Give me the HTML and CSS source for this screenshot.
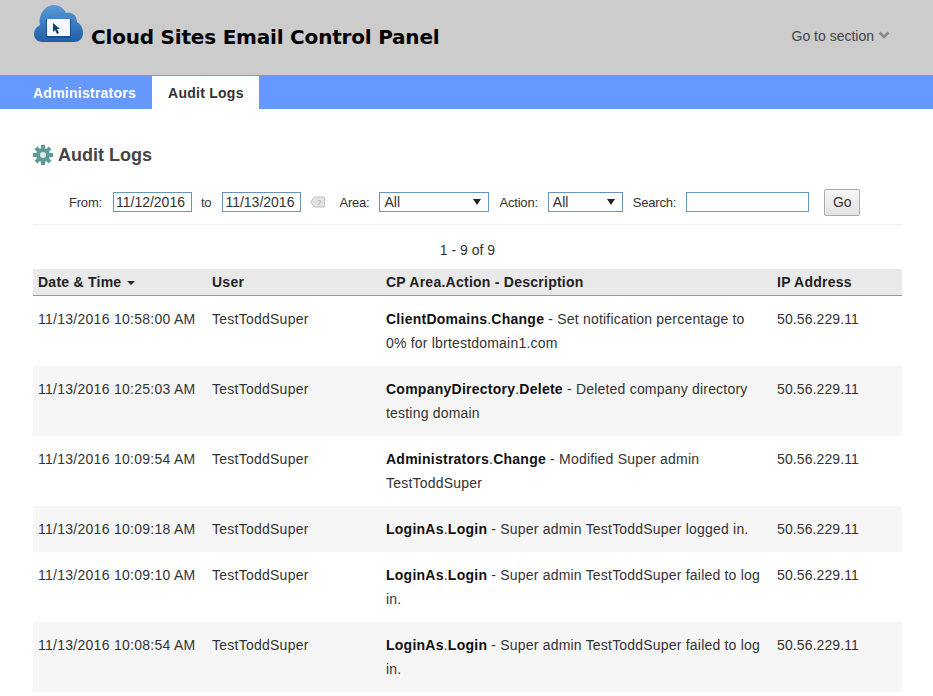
FILE: index.html
```html
<!DOCTYPE html>
<html lang="en">
<head>
  <meta charset="UTF-8">
  <meta name="viewport" content="width=device-width, initial-scale=1.0">
  <title>Audit Logs</title>
  <link rel="stylesheet" href="styles.css">
</head>
<body>
  <header class="top-bar">
    <div class="brand">
      <svg class="brand-logo" width="50" height="40" viewBox="0 0 50 40" aria-hidden="true">
        <defs>
          <linearGradient id="cloudFill" x1="0" y1="0" x2="0" y2="1">
            <stop offset="0" stop-color="#5b9ad6"/>
            <stop offset="1" stop-color="#1f5fa8"/>
          </linearGradient>
        </defs>
        <path d="M8 38 C3 38 0 34 0 30 C0 26 2 23 6 21 C4 11 11 1 20 1 C26 1 30 5 32 9 C37 7 43 11 43 18 C47 20 49 25 49 29 C49 35 45 38 40 38 Z" fill="url(#cloudFill)"/>
        <rect x="12" y="15" width="25" height="19" fill="#174f96"/>
        <rect x="13" y="15" width="23" height="17" fill="#f3f6fa"/>
        <path d="M19 19 L19 28 L21 26 L23 30 L25 29 L23 25 L26 25 Z" fill="#123f7a"/>
      </svg>
      <h1 class="brand-title">Cloud Sites Email Control Panel</h1>
    </div>
    <div class="section-menu">
      <span>Go to section</span>
      <svg width="12" height="8" viewBox="0 0 12 8" aria-hidden="true">
        <path d="M1.5 1.5 L6 6 L10.5 1.5" fill="none" stroke="#888" stroke-width="2.6"/>
      </svg>
    </div>
  </header>

  <nav class="tabs">
    <a class="tab" href="#">Administrators</a>
    <a class="tab active" href="#">Audit Logs</a>
  </nav>

  <main class="content">
    <h2 class="page-title">
      <svg width="20" height="20" viewBox="0 0 20 20" aria-hidden="true">
        <g fill="#5f9a98">
          <rect x="8" y="0" width="4" height="20"/>
          <rect x="8" y="0" width="4" height="20" transform="rotate(45 10 10)"/>
          <rect x="8" y="0" width="4" height="20" transform="rotate(90 10 10)"/>
          <rect x="8" y="0" width="4" height="20" transform="rotate(135 10 10)"/>
          <circle cx="10" cy="10" r="7"/>
        </g>
        <circle cx="10" cy="10" r="3" fill="#dcebea"/>
      </svg>
      Audit Logs
    </h2>

    <form class="filters">
      <label for="from">From:</label>
      <input class="date-input" id="from" type="text" value="11/12/2016">
      <label for="to">to</label>
      <input class="date-input" id="to" type="text" value="11/13/2016">
      <svg class="clear-icon" width="15" height="12" viewBox="0 0 15 12" aria-hidden="true">
        <path d="M4.5 1 H14.5 V11 H4.5 L0.5 6 Z" fill="#e4e4e4" stroke="#c4c4c4"/>
        <text x="9" y="9" font-size="8" font-family="Liberation Sans, sans-serif" text-anchor="middle" fill="#a8a8a8">?</text>
      </svg>
      <label class="label-tight" for="area">Area:</label>
      <div class="select select-area" id="area"><span>All</span><i class="select-arrow"></i></div>
      <label class="label-tight" for="action">Action:</label>
      <div class="select select-action" id="action"><span>All</span><i class="select-arrow"></i></div>
      <label class="label-tight" for="search">Search:</label>
      <input class="search-input" id="search" type="text">
      <button class="go-btn" type="button">Go</button>
    </form>

    <p class="pager">1 - 9 of 9</p>

    <table class="logs">
      <thead>
        <tr>
          <th class="col-date">Date &amp; Time <i class="sort-arrow"></i></th>
          <th class="col-user">User</th>
          <th class="col-desc">CP Area.Action - Description</th>
          <th class="col-ip">IP Address</th>
        </tr>
      </thead>
      <tbody>
        <tr>
          <td class="cell-date">11/13/2016 10:58:00 AM</td>
          <td>TestToddSuper</td>
          <td class="cell-desc"><b>ClientDomains</b>.<b>Change</b> - Set notification percentage to 0% for lbrtestdomain1.com</td>
          <td class="cell-ip">50.56.229.11</td>
        </tr>
        <tr>
          <td class="cell-date">11/13/2016 10:25:03 AM</td>
          <td>TestToddSuper</td>
          <td class="cell-desc"><b>CompanyDirectory</b>.<b>Delete</b> - Deleted company directory testing domain</td>
          <td class="cell-ip">50.56.229.11</td>
        </tr>
        <tr>
          <td class="cell-date">11/13/2016 10:09:54 AM</td>
          <td>TestToddSuper</td>
          <td class="cell-desc"><b>Administrators</b>.<b>Change</b> - Modified Super admin TestToddSuper</td>
          <td class="cell-ip">50.56.229.11</td>
        </tr>
        <tr>
          <td class="cell-date">11/13/2016 10:09:18 AM</td>
          <td>TestToddSuper</td>
          <td class="cell-desc"><b>LoginAs</b>.<b>Login</b> - Super admin TestToddSuper logged in.</td>
          <td class="cell-ip">50.56.229.11</td>
        </tr>
        <tr>
          <td class="cell-date">11/13/2016 10:09:10 AM</td>
          <td>TestToddSuper</td>
          <td class="cell-desc"><b>LoginAs</b>.<b>Login</b> - Super admin TestToddSuper failed to log in.</td>
          <td class="cell-ip">50.56.229.11</td>
        </tr>
        <tr>
          <td class="cell-date">11/13/2016 10:08:54 AM</td>
          <td>TestToddSuper</td>
          <td class="cell-desc"><b>LoginAs</b>.<b>Login</b> - Super admin TestToddSuper failed to log in.</td>
          <td class="cell-ip">50.56.229.11</td>
        </tr>
      </tbody>
    </table>
  </main>
</body>
</html>
```

FILE: styles.css
```css
body {
  margin: 0;
  font-family: "Liberation Sans", Arial, sans-serif;
  font-size: 14px;
  color: #333;
  background-color: #fff;
}

.top-bar {
  display: flex;
  justify-content: space-between;
  height: 75px;
  padding: 0 43px 0 34px;
  box-sizing: border-box;
  background-color: #ccc;
}
.brand {
  display: flex;
  align-items: flex-start;
  padding-top: 4px;
}
.brand-logo {
  flex: none;
  margin-right: 7px;
}
.brand-title {
  margin: 20px 0 0;
  font-family: "DejaVu Sans", Verdana, sans-serif;
  font-size: 20px;
  font-weight: bold;
  line-height: 26px;
  letter-spacing: -0.2px;
  color: #000;
}
.section-menu {
  display: flex;
  gap: 4px;
  padding-top: 28px;
  line-height: 16px;
  color: #444;
}
.section-menu svg {
  margin-top: 3px;
}

.tabs {
  display: flex;
  align-items: flex-end;
  height: 34px;
  padding-left: 17px;
  background-color: #69f;
}
.tab {
  height: 33px;
  padding: 0 16px;
  font-weight: bold;
  line-height: 34px;
  letter-spacing: 0.25px;
  color: #fff;
  text-decoration: none;
}
.tab.active {
  padding-right: 15px;
  background-color: #fff;
  color: #333;
}

.content {
  margin: 0 31px 0 33px;
}
.page-title {
  display: flex;
  align-items: center;
  gap: 5px;
  margin: 0;
  padding-top: 35px;
  font-size: 18px;
  line-height: 22px;
  color: #444;
}

.filters {
  display: flex;
  align-items: center;
  height: 28px;
  margin-top: 22px;
  padding: 0 0 8px 36px;
  border-bottom: 1px solid #eee;
}
.filters label {
  margin-right: 11px;
  font-size: 13px;
  letter-spacing: -0.2px;
}
.filters .label-tight {
  margin-right: 10px;
}
.date-input,
.search-input,
.select {
  height: 20px;
  box-sizing: border-box;
  border: 1px solid #6a93b8;
  background-color: #fff;
  font-family: inherit;
  font-size: 14px;
  color: #333;
}
.date-input {
  width: 79px;
  margin-right: 9px;
  padding: 0 2px;
}
.clear-icon {
  margin-right: 14px;
}
.select {
  display: flex;
  align-items: center;
  justify-content: space-between;
  padding: 0 7px 0 4px;
  margin-right: 10px;
}
.select-area {
  width: 110px;
}
.select-action {
  width: 75px;
}
.select-arrow {
  width: 0;
  height: 0;
  border-left: 4px solid transparent;
  border-right: 4px solid transparent;
  border-top: 6px solid #222;
}
.search-input {
  width: 123px;
  margin-right: 15px;
}
.go-btn {
  width: 36px;
  height: 27px;
  padding: 0;
  border: 1px solid #aaa;
  border-radius: 2px;
  background: linear-gradient(#f6f6f6, #e2e2e2);
  font-family: inherit;
  font-size: 14px;
  color: #333;
}

.pager {
  margin: 0;
  padding-top: 17px;
  line-height: 16px;
  text-align: center;
}

.logs {
  width: 100%;
  margin-top: 11px;
  border-collapse: collapse;
  table-layout: fixed;
}
.logs th {
  height: 26px;
  padding: 0 5px;
  border-bottom: 1px solid #999;
  background-color: #e9e9e9;
  font-weight: bold;
  letter-spacing: 0.25px;
  text-align: left;
  color: #222;
}
.logs td {
  padding: 11px 5px;
  line-height: 24px;
  letter-spacing: 0.25px;
  vertical-align: top;
}
.logs .cell-date {
  letter-spacing: 0.27px;
}
.logs .cell-desc {
  letter-spacing: 0.2px;
}
.logs .cell-desc b {
  letter-spacing: 0.25px;
}
.logs .cell-ip {
  letter-spacing: 0.1px;
}
.logs tbody tr:nth-child(even) td {
  background-color: #f6f6f6;
}
.logs b {
  color: #111;
}
.col-date {
  width: 164px;
}
.col-user {
  width: 164px;
}
.col-desc {
  width: 381px;
}
.sort-arrow {
  display: inline-block;
  margin-left: 1px;
  vertical-align: middle;
  border-left: 4px solid transparent;
  border-right: 4px solid transparent;
  border-top: 4px solid #222;
}
```
